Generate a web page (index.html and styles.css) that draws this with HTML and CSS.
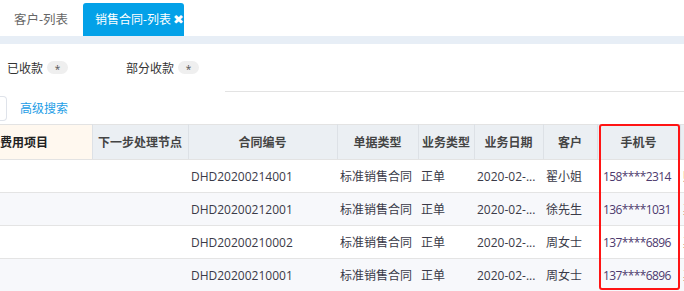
FILE: index.html
```html
<html>

<head>
    <meta name="viewport" content="width=device-width, initial-scale=1.0">
    <link rel="stylesheet" href="styles.css">
</head>

<body>
    <div class="page">
        <div class="tabbar">
            <div class="tab">客户-列表</div>
            <div class="tab active">销售合同-列表<span class="close">✖</span></div>
        </div>
        <div class="strip"></div>

        <div class="filters">
            <div class="filteritem">已收款<span class="badge">*</span></div>
            <div class="filteritem">部分收款<span class="badge">*</span></div>
        </div>
        <div class="divider"></div>

        <div class="searchrow">
            <div class="inputstub"></div>
            <a class="advlink">高级搜索</a>
        </div>

        <div class="tablewrap">
            <table class="grid">
                <colgroup>
                    <col style="width:92px">
                    <col style="width:96px">
                    <col style="width:149px">
                    <col style="width:81px">
                    <col style="width:56px">
                    <col style="width:69px">
                    <col style="width:54px">
                    <col style="width:83px">
                    <col style="width:90px">
                </colgroup>
                <thead>
                    <tr>
                        <th class="fixedcol">费用项目</th>
                        <th>下一步处理节点</th>
                        <th>合同编号</th>
                        <th>单据类型</th>
                        <th>业务类型</th>
                        <th>业务日期</th>
                        <th>客户</th>
                        <th>手机号</th>
                        <th>联系地址</th>
                    </tr>
                </thead>
                <tbody>
                    <tr>
                        <td></td>
                        <td></td>
                        <td>DHD20200214001</td>
                        <td>标准销售合同</td>
                        <td>正单</td>
                        <td>2020-02-...</td>
                        <td>翟小姐</td>
                        <td class="phone">158****2314</td>
                        <td>财务</td>
                    </tr>
                    <tr>
                        <td></td>
                        <td></td>
                        <td>DHD20200212001</td>
                        <td>标准销售合同</td>
                        <td>正单</td>
                        <td>2020-02-...</td>
                        <td>徐先生</td>
                        <td class="phone">136****1031</td>
                        <td>其他</td>
                    </tr>
                    <tr>
                        <td></td>
                        <td></td>
                        <td>DHD20200210002</td>
                        <td>标准销售合同</td>
                        <td>正单</td>
                        <td>2020-02-...</td>
                        <td>周女士</td>
                        <td class="phone">137****6896</td>
                        <td>其他</td>
                    </tr>
                    <tr>
                        <td></td>
                        <td></td>
                        <td>DHD20200210001</td>
                        <td>标准销售合同</td>
                        <td>正单</td>
                        <td>2020-02-...</td>
                        <td>周女士</td>
                        <td class="phone">137****6896</td>
                        <td>其他</td>
                    </tr>
                </tbody>
            </table>
            <!-- highlight around the phone column -->
            <div class="highlight"></div>
        </div>
    </div>
</body>

</html>
```

FILE: styles.css
```css
body {
    margin: 0px;
    background-color: white;
    font-family: "Open Sans", "Noto Sans CJK SC", sans-serif;
    font-size: 12px;
    color: #333;
}

.page {
    width: 684px;
    height: 291px;
    overflow: hidden;
}

.tabbar {
    height: 36px;
    display: flex;
    align-items: flex-end;
}

.tab {
    height: 33px;
    line-height: 33px;
    padding: 0 14px;
    color: #666;
    font-size: 12.5px;
    white-space: nowrap;
}

.tab.active {
    width: 89px;
    padding: 0 0 0 12px;
    margin-left: 1px;
    overflow: hidden;
    background-color: #03a1e8;
    color: white;
    font-size: 12px;
    border-radius: 3px 3px 0 0;
}

.close {
    font-family: "DejaVu Sans", sans-serif;
    font-size: 13px;
    margin-left: 2px;
}

.strip {
    height: 8px;
    background-color: #e7eef6;
}

.filters {
    height: 47px;
    display: flex;
    align-items: center;
    padding-left: 7px;
}

.filteritem {
    width: 119px;
    display: flex;
    align-items: center;
    color: #333;
}

.badge {
    width: 21px;
    height: 13px;
    line-height: 16px;
    margin-left: 4px;
    border-radius: 7px;
    background-color: #efefef;
    color: #555;
    font-size: 10px;
    text-align: center;
}

.divider {
    height: 1px;
    margin-left: 225px;
    background-color: #e3e3e3;
}

.searchrow {
    height: 32px;
    display: flex;
    align-items: center;
}

.inputstub {
    width: 6px;
    height: 23px;
    border: 1px solid #dfe3ea;
    border-left: none;
    border-radius: 0 4px 4px 0;
}

.advlink {
    margin-left: 13px;
    color: #1d9de6;
}

.tablewrap {
    position: relative;
}

.grid {
    border-collapse: collapse;
    table-layout: fixed;
    width: 770px;
    white-space: nowrap;
    font-family: "Open Sans", "Noto Sans CJK SC", sans-serif;
    font-size: 12px;
}

.grid th {
    height: 35px;
    padding: 0;
    background-color: #ebeff3;
    border-top: 1px solid #e3e3e3;
    border-bottom: 1px solid #e3e3e3;
    border-right: 1px solid #dde1e6;
    color: #444;
    font-weight: bold;
    text-align: center;
    overflow: hidden;
}

.grid th.fixedcol {
    background-color: #fff8ef;
    color: #222;
    text-align: left;
}

.grid td {
    height: 33px;
    padding: 0 3px;
    border-bottom: 1px solid #e4e4e4;
    color: #3a3a48;
    overflow: hidden;
}

.grid tbody tr:nth-child(even) td {
    background-color: #f7f8fb;
}

.grid td.phone {
    padding-left: 6px;
    letter-spacing: -0.6px;
    color: #4d3a6e;
}

.highlight {
    position: absolute;
    left: 599px;
    top: 0;
    width: 81px;
    height: 166px;
    box-sizing: border-box;
    border: 2px solid #ff1414;
    border-radius: 3px;
}
```
